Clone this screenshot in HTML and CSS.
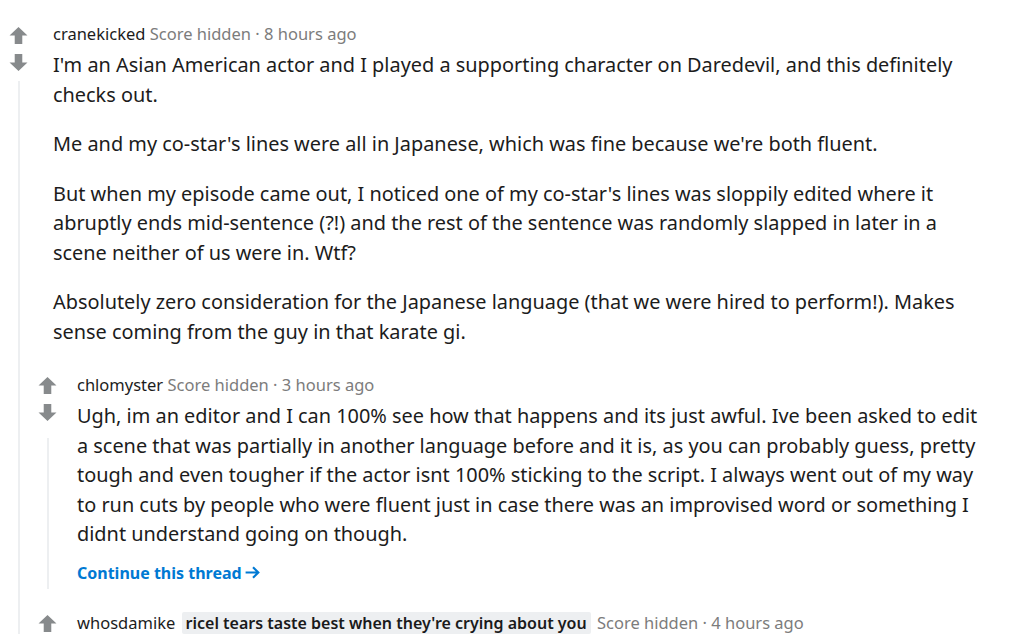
FILE: index.html
```html
<!DOCTYPE html>
<html lang="en">
<head>
<meta charset="utf-8">
<title>Comments</title>
<link rel="stylesheet" href="styles.css">
</head>
<body>
<div class="page">
  <div class="comment top">
    <div class="rail">
      <svg class="vote" viewBox="0 0 19 18"><path d="M9.5 0 L19 9 H13.5 V18 H5.5 V9 H0 Z"/></svg>
      <svg class="vote down" viewBox="0 0 19 18"><path d="M9.5 18 L19 9 H13.5 V0 H5.5 V9 H0 Z"/></svg>
      <div class="line"></div>
    </div>
    <div class="main">
      <div class="meta"><span class="user">cranekicked</span> <span class="dim">Score hidden · 8 hours ago</span></div>
      <div class="body">
        <p>I'm an Asian American actor and I played a supporting character on Daredevil, and this definitely checks out.</p>
        <p>Me and my co-star's lines were all in Japanese, which was fine because we're both fluent.</p>
        <p>But when my episode came out, I noticed one of my co-star's lines was sloppily edited where it abruptly ends mid-sentence (?!) and the rest of the sentence was randomly slapped in later in a scene neither of us were in. Wtf?</p>
        <p>Absolutely zero consideration for the Japanese language (that we were hired to perform!). Makes sense coming from the guy in that karate gi.</p>
      </div>
      <div class="children">
        <div class="comment child first">
          <div class="rail">
            <svg class="vote" viewBox="0 0 19 18"><path d="M9.5 0 L19 9 H13.5 V18 H5.5 V9 H0 Z"/></svg>
            <svg class="vote down" viewBox="0 0 19 18"><path d="M9.5 18 L19 9 H13.5 V0 H5.5 V9 H0 Z"/></svg>
            <div class="line"></div>
          </div>
          <div class="main">
            <div class="meta"><span class="user">chlomyster</span> <span class="dim">Score hidden · 3 hours ago</span></div>
            <div class="body">
              <p>Ugh, im an editor and I can 100% see how that happens and its just awful. Ive been asked to edit a scene that was partially in another language before and it is, as you can probably guess, pretty tough and even tougher if the actor isnt 100% sticking to the script. I always went out of my way to run cuts by people who were fluent just in case there was an improvised word or something I didnt understand going on though.</p>
            </div>
            <a class="more" href="#">Continue this thread<svg class="arrow" viewBox="0 0 16 16"><path d="M1.5 8 H13.5 M8.5 3 L13.5 8 L8.5 13"/></svg></a>
          </div>
        </div>
        <div class="comment child last">
          <div class="rail">
            <svg class="vote" viewBox="0 0 19 18"><path d="M9.5 0 L19 9 H13.5 V18 H5.5 V9 H0 Z"/></svg>
          </div>
          <div class="main">
            <div class="meta"><span class="user">whosdamike</span> <span class="flair">ricel tears taste best when they're crying about you</span> <span class="dim">Score hidden · 4 hours ago</span></div>
          </div>
        </div>
      </div>
    </div>
  </div>
</div>
</body>
</html>
```

FILE: styles.css
```css
html, body {
  margin: 0;
  padding: 0;
  background: #ffffff;
}
.page {
  width: 1024px;
  height: 639px;
  overflow: hidden;
  padding-top: 23px;
  box-sizing: border-box;
  font-family: "Noto Sans", sans-serif;
  color: #1c1c1c;
}
.comment {
  display: flex;
}
.rail {
  display: flex;
  flex-direction: column;
  align-items: center;
  flex: none;
}
.top > .rail {
  width: 36px;
  padding-top: 4px;
}
.child > .rail {
  width: 22px;
  padding-top: 3px;
}
.vote {
  width: 19px;
  height: 17px;
  fill: #878a8c;
  flex: none;
}
.vote.down {
  margin-top: 10px;
}
.line {
  width: 2px;
  background: #edeff1;
  flex: 1;
  margin-top: 10px;
  margin-left: 2px;
}
.child .line {
  margin-top: 17px;
}
.top > .main {
  flex: 1;
  min-width: 0;
}
.top > .main > .meta,
.top > .main > .body {
  margin-left: 17px;
  width: 932px;
}
.child > .main {
  margin-left: 19px;
  width: 908px;
}
.child.first > .main {
  padding-bottom: 5px;
}
.meta {
  font-size: 16.5px;
  line-height: 22px;
  height: 22px;
  white-space: nowrap;
}
.user {
  color: #1c1c1c;
}
.dim {
  color: #7c7c7c;
}
.body {
  margin-top: 5px;
  font-size: 19.9px;
  line-height: 29.5px;
}
.body p {
  margin: 0 0 20px 0;
}
.body p:last-child {
  margin-bottom: 0;
}
.children {
  margin-top: 28px;
}
.child.last {
  margin-top: 23px;
}
.more {
  display: inline-flex;
  align-items: center;
  margin-top: 13px;
  font-size: 16px;
  line-height: 22px;
  font-weight: 700;
  color: #0079d3;
  text-decoration: none;
}
.arrow {
  width: 17px;
  height: 17px;
  margin-left: 2px;
  fill: none;
  stroke: #0079d3;
  stroke-width: 2;
}
.flair {
  display: inline-block;
  background: #edeff1;
  color: #1a1a1b;
  font-weight: 600;
  font-size: 16px;
  padding: 0 4px;
  border-radius: 2px;
  margin: 0 2px;
}
```
